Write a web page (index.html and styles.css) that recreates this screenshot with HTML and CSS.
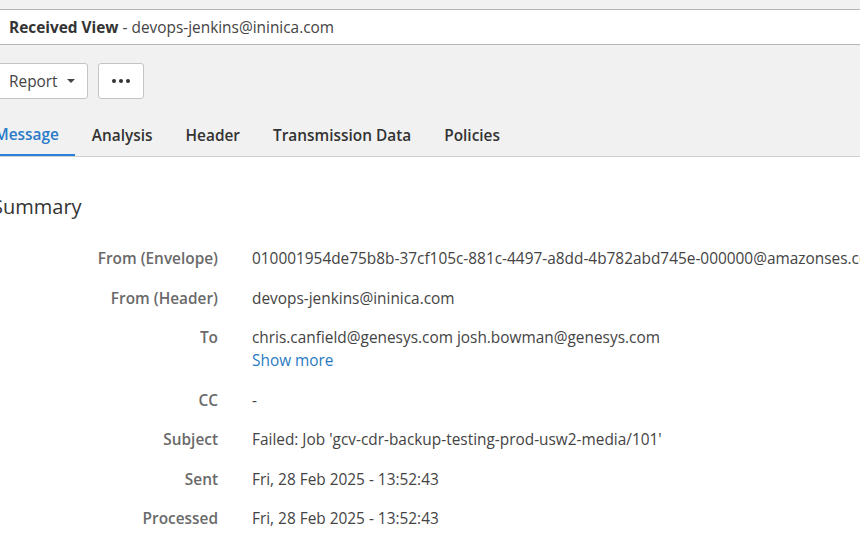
FILE: index.html
```html
<!DOCTYPE html>
<html>
<head>
	<title>Received View</title>
	<meta charset="utf-8">
	<link rel="stylesheet" href="styles.css">
</head>
<body>
<div class="topgap"></div>
<div class="titlebar">
	<b>Received View</b> - devops-jenkins@ininica.com
</div>

<div class="view">
	<div class="toolbar">
		<div class="actions">
			<button class="btn">Report <i class="caret"></i></button>
			<button class="btn more"><i></i><i></i><i></i></button>
		</div>
		<ul class="tabs">
			<li class="active">Message</li>
			<li>Analysis</li>
			<li>Header</li>
			<li>Transmission Data</li>
			<li>Policies</li>
		</ul>
	</div>

	<div class="summary">
		<h2>Summary</h2>
		<dl>
			<dt>From (Envelope)</dt>
			<dd>010001954de75b8b-37cf105c-881c-4497-a8dd-4b782abd745e-000000@amazonses.com</dd>
			<dt>From (Header)</dt>
			<dd>devops-jenkins@ininica.com</dd>
			<dt>To</dt>
			<dd>chris.canfield@genesys.com josh.bowman@genesys.com<br><a href="#">Show more</a></dd>
			<dt>CC</dt>
			<dd>-</dd>
			<dt>Subject</dt>
			<dd>Failed: Job 'gcv-cdr-backup-testing-prod-usw2-media/101'</dd>
			<dt>Sent</dt>
			<dd>Fri, 28 Feb 2025 - 13:52:43</dd>
			<dt>Processed</dt>
			<dd>Fri, 28 Feb 2025 - 13:52:43</dd>
		</dl>
	</div>
</div>
</body>
</html>
```

FILE: styles.css
```css
body{
	margin: 0;
	background-color: #fff;
	font-family: "Open Sans", "Noto Sans", sans-serif;
	color: #444;
	overflow: hidden;
}
.topgap{
	height: 9px;
	background-color: #f1f1f1;
	border-bottom: 1px solid #b5b5b5;
}
.titlebar{
	height: 33px;
	padding: 1px 0 0 9px;
	line-height: 34px;
	font-size: 15.4px;
	color: #444;
	border-bottom: 1px solid #b5b5b5;
	white-space: nowrap;
}
.titlebar b{
	color: #333;
	font-weight: 700;
}

.view{
	margin-left: -28px;
}
.toolbar{
	background-color: #f1f1f1;
	padding-top: 18px;
	border-bottom: 1px solid #cfcfcf;
	margin-left: -100px;
	padding-left: 100px;
}
.actions{
	display: flex;
	gap: 10px;
	padding-left: 24px;
}
.btn{
	height: 36px;
	background-color: #fff;
	border: 1px solid #c4c4c4;
	border-radius: 3px;
	font: 15.4px "Open Sans", sans-serif;
	color: #444;
	padding: 0 12px;
	display: flex;
	align-items: center;
	gap: 9px;
}
.caret{
	width: 0;
	height: 0;
	border-left: 4px solid transparent;
	border-right: 4px solid transparent;
	border-top: 4px solid #444;
}
.more{
	width: 46px;
	justify-content: center;
	gap: 3px;
}
.more i{
	width: 4px;
	height: 4px;
	border-radius: 50%;
	background-color: #333;
}

.tabs{
	list-style: none;
	margin: 13px 0 0 6px;
	padding: 0;
	display: flex;
}
.tabs li{
	padding: 3px 16.5px 0;
	height: 44px;
	line-height: 41px;
	font-size: 15.4px;
	font-weight: 600;
	color: #333;
	white-space: nowrap;
	box-sizing: border-box;
}
.tabs li.active{
	color: #2a7bc9;
	border-bottom: 2px solid #2b7fd9;
	line-height: 39px;
}

.summary{
	padding-top: 36px;
}
.summary h2{
	margin: 0 0 26px 20px;
	font-size: 20px;
	line-height: 28px;
	font-weight: 500;
	color: #333;
}
.summary dl{
	margin: 0;
	display: grid;
	grid-template-columns: 246px 1fr;
	column-gap: 34px;
	row-gap: 16.5px;
	font-size: 15.4px;
	line-height: 23px;
}
.summary dt{
	text-align: right;
	font-weight: 600;
	color: #6a6a6a;
}
.summary dd{
	margin: 0;
	white-space: nowrap;
	color: #444;
}
.summary a{
	color: #2a7ac3;
	text-decoration: none;
}
```
